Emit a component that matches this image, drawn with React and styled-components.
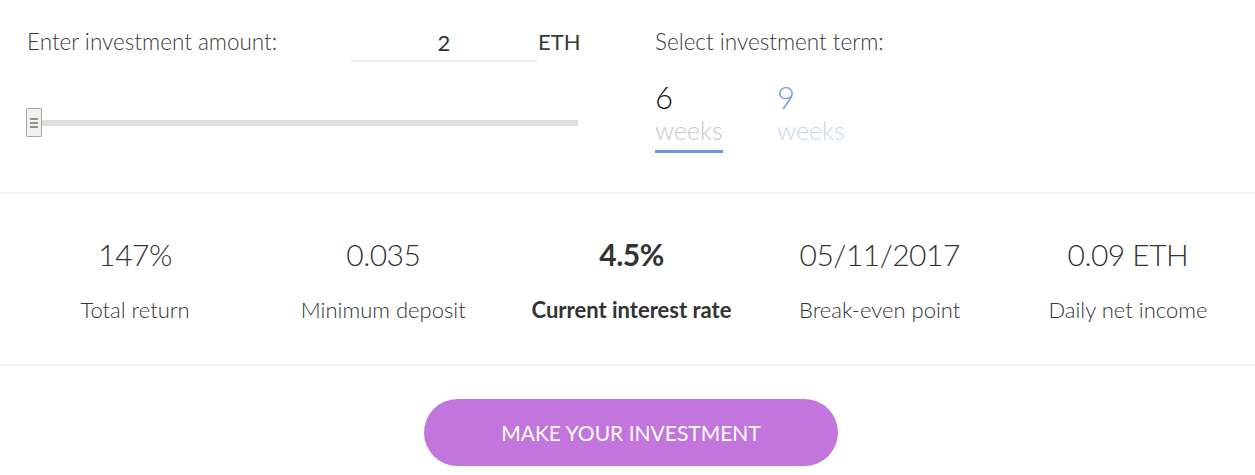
import React, { useState } from "react";
import styled, { createGlobalStyle } from "styled-components";

const GlobalStyle = createGlobalStyle`
  body {
    margin: 0;
    background: #fff;
    font-family: Lato, "Open Sans", sans-serif;
    color: #333;
  }
`;

const Calculator = styled.section`
  width: 1255px;
`;

const Top = styled.div`
  display: flex;
  padding: 27px 0 0 27px;
  box-sizing: border-box;
  height: 194px;
  border-bottom: 2px solid #f2f2f2;
`;

const AmountBlock = styled.div`
  width: 551px;
  flex-shrink: 0;
`;

const AmountRow = styled.div`
  display: flex;
  align-items: flex-start;
  height: 35px;
`;

const Label = styled.span`
  font-size: 22.5px;
  font-weight: 300;
  color: #3a3a3a;
  line-height: 30px;
  white-space: nowrap;
`;

const AmountInput = styled.input`
  margin-left: auto;
  flex-shrink: 0;
  width: 188px;
  height: 35px;
  border: none;
  border-bottom: 2px solid #ebeffa;
  font: inherit;
  font-size: 22px;
  font-weight: 400;
  color: #333;
  text-align: center;
  padding: 0 0 3px;
  outline: none;
  box-sizing: border-box;
  line-height: 30px;
`;

const Unit = styled.span`
  width: 40px;
  flex-shrink: 0;
  font-size: 22px;
  font-weight: 400;
  line-height: 30px;
  color: #3a3a3a;
`;

const Slider = styled.div`
  position: relative;
  margin-top: 46px;
  height: 29px;
  display: flex;
  align-items: center;
`;

const Track = styled.div`
  flex: 1;
  height: 6px;
  background: #e0dfdb;
  margin-left: 13px;
`;

const Handle = styled.div`
  position: absolute;
  left: -1px;
  top: 0;
  width: 14px;
  height: 27px;
  border: 1px solid #a9a9a5;
  background: #f1f0ee;
  border-radius: 1px;
  display: flex;
  flex-direction: column;
  align-items: center;
  justify-content: center;
  gap: 2px;

  span {
    display: block;
    width: 8px;
    height: 2px;
    background: #8f8f8b;
  }
`;

const TermBlock = styled.div`
  margin-left: 77px;
`;

const Terms = styled.div`
  display: flex;
  gap: 54px;
  margin-top: 22px;
`;

const Term = styled.button`
  background: none;
  border: none;
  padding: 0 0 5px;
  text-align: left;
  cursor: pointer;
  font-family: inherit;
  border-bottom: 3px solid ${(p) => (p.$active ? "#6f95e6" : "transparent")};
  width: 68px;

  strong {
    display: block;
    font-size: 31px;
    font-weight: 300;
    line-height: 37px;
    color: ${(p) => (p.$active ? "#111" : "#7b9de6")};
  }

  small {
    display: block;
    font-size: 25px;
    font-weight: 300;
    line-height: 29px;
    color: ${(p) => (p.$active ? "#c8c8c8" : "#c9d5f1")};
  }
`;

const Stats = styled.div`
  display: grid;
  grid-template-columns: repeat(5, 1fr);
  align-content: start;
  padding: 42px 3px 0 11px;
  height: 172px;
  box-sizing: border-box;
  border-bottom: 2px solid #f2f2f2;
`;

const Stat = styled.div`
  text-align: center;
  color: #333;
`;

const Value = styled.div`
  font-size: 30px;
  font-weight: ${(p) => (p.$bold ? 700 : 300)};
  letter-spacing: -0.5px;
  line-height: 36px;
`;

const Caption = styled.div`
  margin-top: 24px;
  font-size: 22px;
  font-weight: ${(p) => (p.$bold ? 700 : 300)};
  line-height: 27px;
`;

const Footer = styled.div`
  display: flex;
  justify-content: center;
  padding-top: 33px;
  padding-left: 7px;
`;

const InvestButton = styled.button`
  width: 414px;
  height: 67px;
  border: none;
  border-radius: 34px;
  background: #c275dc;
  color: #fff;
  font-family: inherit;
  font-size: 21px;
  font-weight: 400;
  text-transform: uppercase;
  cursor: pointer;
  padding-bottom: 2px;
`;

const stats = [
  { value: "147%", label: "Total return" },
  { value: "0.035", label: "Minimum deposit" },
  { value: "4.5%", label: "Current interest rate", bold: true },
  { value: "05/11/2017", label: "Break-even point" },
  { value: "0.09 ETH", label: "Daily net income" },
];

export default function App() {
  const [term, setTerm] = useState(6);
  const [amount, setAmount] = useState("2");

  return (
    <Calculator>
      <GlobalStyle />
      <Top>
        <AmountBlock>
          <AmountRow>
            <Label>Enter investment amount:</Label>
            <AmountInput value={amount} onChange={(e) => setAmount(e.target.value)} />
            <Unit>ETH</Unit>
          </AmountRow>
          <Slider>
            <Track />
            <Handle>
              <span />
              <span />
              <span />
            </Handle>
          </Slider>
        </AmountBlock>
        <TermBlock>
          <Label>Select investment term:</Label>
          <Terms>
            {[6, 9].map((w) => (
              <Term key={w} $active={term === w} onClick={() => setTerm(w)}>
                <strong>{w}</strong>
                <small>weeks</small>
              </Term>
            ))}
          </Terms>
        </TermBlock>
      </Top>
      <Stats>
        {stats.map((s) => (
          <Stat key={s.label}>
            <Value $bold={s.bold}>{s.value}</Value>
            <Caption $bold={s.bold}>{s.label}</Caption>
          </Stat>
        ))}
      </Stats>
      <Footer>
        <InvestButton>Make your investment</InvestButton>
      </Footer>
    </Calculator>
  );
}
